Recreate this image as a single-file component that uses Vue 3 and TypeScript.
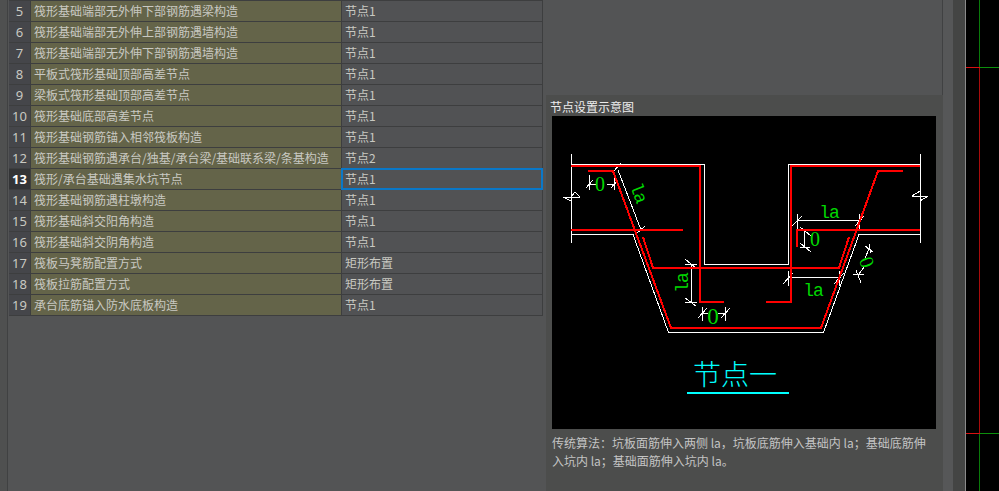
<script setup lang="ts">
interface Row {
  no: number
  name: string
  value: string
}

const rows: Row[] = [
  { no: 5, name: '筏形基础端部无外伸下部钢筋遇梁构造', value: '节点1' },
  { no: 6, name: '筏形基础端部无外伸上部钢筋遇墙构造', value: '节点1' },
  { no: 7, name: '筏形基础端部无外伸下部钢筋遇墙构造', value: '节点1' },
  { no: 8, name: '平板式筏形基础顶部高差节点', value: '节点1' },
  { no: 9, name: '梁板式筏形基础顶部高差节点', value: '节点1' },
  { no: 10, name: '筏形基础底部高差节点', value: '节点1' },
  { no: 11, name: '筏形基础钢筋锚入相邻筏板构造', value: '节点1' },
  { no: 12, name: '筏形基础钢筋遇承台/独基/承台梁/基础联系梁/条基构造', value: '节点2' },
  { no: 13, name: '筏形/承台基础遇集水坑节点', value: '节点1' },
  { no: 14, name: '筏形基础钢筋遇柱墩构造', value: '节点1' },
  { no: 15, name: '筏形基础斜交阳角构造', value: '节点1' },
  { no: 16, name: '筏形基础斜交阴角构造', value: '节点1' },
  { no: 17, name: '筏板马凳筋配置方式', value: '矩形布置' },
  { no: 18, name: '筏板拉筋配置方式', value: '矩形布置' },
  { no: 19, name: '承台底筋锚入防水底板构造', value: '节点1' },
]

const selectedNo = 13

const previewDesc =
  '传统算法\uFF1A坑板面筋伸入两侧 la\uFF0C坑板底筋伸入基础内 la\uFF1B基础底筋伸入坑内 la\uFF1B基础面筋伸入坑内 la。'

// outline of the pit, in screen coordinates
const whiteLines = [
  '571.5,154 571.5,243',
  '920.5,154 920.5,243',
  '571,164.5 704.5,164.5 704.5,264.5 788.5,264.5 788.5,164.5 920,164.5',
  '571,234.5 633,234.5 668.5,332.5 823.5,332.5 859,234.5 920,234.5',
  // dimension lines
  '618,170 641,230',
  '691.5,264 691.5,302',
  '702,313.5 708,313.5',
  '718,313.5 725,313.5',
  '589,184.5 596,184.5',
  '607,184.5 614,184.5',
  '797,220.5 859,220.5',
  '804.5,230 804.5,247',
  '788,277.5 839,277.5',
  '869,249 865,258',
  '864,267 859,274',
  // ticks
  '589.5,175 589.5,190',
  '586,188 593,180',
  '614.5,175 614.5,190',
  '611,188 618,180',
  '613,172 621,163',
  '636,234 645,226',
  '685,264.5 697,264.5',
  '685,259 696,268',
  '685,302.5 697,302.5',
  '685,298 696,306',
  '702.5,307 702.5,321',
  '698,318 707,308',
  '725.5,307 725.5,321',
  '721,318 730,308',
  '797.5,214 797.5,229',
  '792,226 802,216',
  '859.5,214 859.5,229',
  '855,226 864,216',
  '800,230.5 810,230.5',
  '800,227 811,236',
  '800,247.5 810,247.5',
  '800,243 811,252',
  '788.5,271 788.5,286',
  '783,284 793,273',
  '839.5,271 839.5,286',
  '834,284 844,273',
  '865,246 873,252',
  '869,244 871,253',
  '853,274 864,275',
  '856,270 861,283',
  // break marks
  '563,197.5 580,197.5',
  '571,197 575,192 580,197',
  '563,197 571,201',
  '912,196.5 928,196.5',
  '920,191 912,196',
  '920,201 928,196',
]

const redLines = [
  '571,166 700,166 700,302 724,302',
  '588,171 613,171 671,328 821,328 878,171 903,171',
  '571,230 683,230',
  '643,237 653,268 839,268 849,237',
  '920,166 791,166 791,302 766,302',
  '920,230 797,230 797,247',
]

interface DimLabel {
  text: string
  x: number
  y: number
  angle: number
  big?: boolean
}

const dimLabels: DimLabel[] = [
  { text: '0', x: 600, y: 184, angle: 0 },
  { text: 'la', x: 638, y: 193, angle: 69 },
  { text: 'la', x: 683, y: 283, angle: -90 },
  { text: '0', x: 713, y: 316, angle: 0, big: true },
  { text: 'la', x: 829, y: 213, angle: 0 },
  { text: '0', x: 815, y: 239, angle: 0 },
  { text: 'la', x: 813, y: 291, angle: 0 },
  { text: '0', x: 867, y: 262, angle: 70 },
]

// crosshair cells on the model view: 3 columns x 5 rows
const canvasCells = [
  '', 'green', '',
  'red', 'red', 'green-h',
  '', 'red-dim', '',
  'red', 'red', 'green-h',
  '', 'green', '',
]
</script>

<template>
  <div class="app">
    <div class="main">
      <div class="left">
        <div class="gutter"></div>
        <div class="table">
          <div
            v-for="row in rows"
            :key="row.no"
            class="row"
            :class="{ selected: row.no === selectedNo }"
          >
            <div class="no">{{ row.no }}</div>
            <div class="name">{{ row.name }}</div>
            <div class="value">{{ row.value }}</div>
          </div>
        </div>
      </div>
      <div class="right">
        <div class="spacer"></div>
        <div class="preview">
          <div class="preview-title">节点设置示意图</div>
          <svg class="drawing" width="384" height="313" viewBox="552 116 384 313">
            <rect x="552" y="116" width="384" height="313" fill="#000" />
            <g fill="none" stroke="#fff" stroke-width="1" shape-rendering="crispEdges">
              <polyline v-for="(pts, i) in whiteLines" :key="i" :points="pts" />
            </g>
            <g fill="none" stroke="#ff0000" stroke-width="2" shape-rendering="crispEdges">
              <polyline v-for="(pts, i) in redLines" :key="i" :points="pts" />
            </g>
            <text
              v-for="(d, i) in dimLabels"
              :key="i"
              class="dim"
              :class="{ big: d.big, zero: d.text === '0' }"
              text-anchor="middle"
              dominant-baseline="central"
              :transform="`translate(${d.x} ${d.y}) rotate(${d.angle})`"
            >{{ d.text }}</text>
            <text class="node-title" x="693" y="385">节点一</text>
            <rect x="687" y="392" width="102" height="2" fill="#00ffff" />
          </svg>
          <p class="preview-desc">{{ previewDesc }}</p>
        </div>
      </div>
    </div>
    <div class="strip"></div>
    <div class="strip-dark"></div>
    <div class="canvas">
      <div v-for="(cell, i) in canvasCells" :key="i" :class="cell"></div>
    </div>
  </div>
</template>

<style scoped>
.app {
  display: flex;
  width: 999px;
  height: 491px;
  overflow: hidden;
  background: #535455;
  font-family: "Noto Sans CJK SC", "Noto Sans", sans-serif;
  font-size: 12px;
}

.main {
  display: flex;
  flex: none;
  width: 943px;
}

.left {
  display: flex;
  width: 546px;
}

.gutter {
  width: 7px;
  margin-right: 1px;
  border-right: 1px solid #404142;
  background: #4f5050;
}

.table {
  width: 534px;
  align-self: flex-start;
  border-top: 1px solid #3d3e3f;
}

.row {
  display: grid;
  grid-template-columns: 22px 311px 201px;
  height: 21px;
  box-sizing: border-box;
  border-bottom: 1px solid #3d3e3f;
  line-height: 20px;
  color: #c9c9c2;
}

.no {
  border-right: 1px solid #3d3e3f;
  background: #45464a;
  text-align: center;
  font-family: "Noto Sans", sans-serif;
  font-size: 13px;
}

.name {
  padding-left: 3px;
  border-right: 1px solid #3d3e3f;
  background: #646449;
  white-space: nowrap;
}

.value {
  padding-left: 3px;
  border-right: 1px solid #3d3e3f;
  background: #515254;
  white-space: nowrap;
}

.row.selected .no {
  background: #333436;
  color: #fff;
  font-weight: 700;
}

.row.selected .value {
  margin: -1px 0 -1px -1px;
  padding-left: 2px;
  border: 2px solid #0a78c8;
  line-height: 18px;
}

.right {
  display: flex;
  flex-direction: column;
  flex: 1;
}

.spacer {
  height: 95px;
  border-right: 1px solid #404142;
}

.preview {
  flex: 1;
  background: #4c4d4c;
  padding-left: 6px;
}

.preview-title {
  height: 21px;
  margin-left: -2px;
  line-height: 24px;
  color: #ececec;
}

.drawing {
  display: block;
}

.dim {
  fill: #00d800;
  font-family: "Liberation Mono", monospace;
  font-size: 18px;
  letter-spacing: -1px;
}

.dim.zero {
  font-family: "Liberation Serif", serif;
  font-size: 20px;
  letter-spacing: 0;
}

.dim.big {
  font-size: 23px;
}

.node-title {
  fill: #00ffff;
  font-family: "Noto Sans CJK SC", sans-serif;
  font-size: 28px;
  font-weight: 300;
}

.preview-desc {
  width: 384px;
  margin: 5px 0 0;
  line-height: 18px;
  color: #c4c4c4;
}

.strip {
  flex: none;
  width: 10px;
  background: #565758;
}

.strip-dark {
  flex: none;
  width: 12px;
  border-right: 1px solid #8a8a8a;
  background: #444544;
}

.canvas {
  display: grid;
  flex: none;
  grid-template-columns: 13px 1px 19px;
  grid-template-rows: 67px 1px 365px 1px 57px;
  width: 33px;
  height: 491px;
  background: #000;
}

.green {
  background: #0a7a0a;
}

.green-h {
  background: #0c8f0c;
}

.red {
  background: #d81010;
}

.red-dim {
  background: #a80c0c;
}
</style>

<style>
html,
body {
  overflow: hidden;
  background: #535455;
}
</style>
